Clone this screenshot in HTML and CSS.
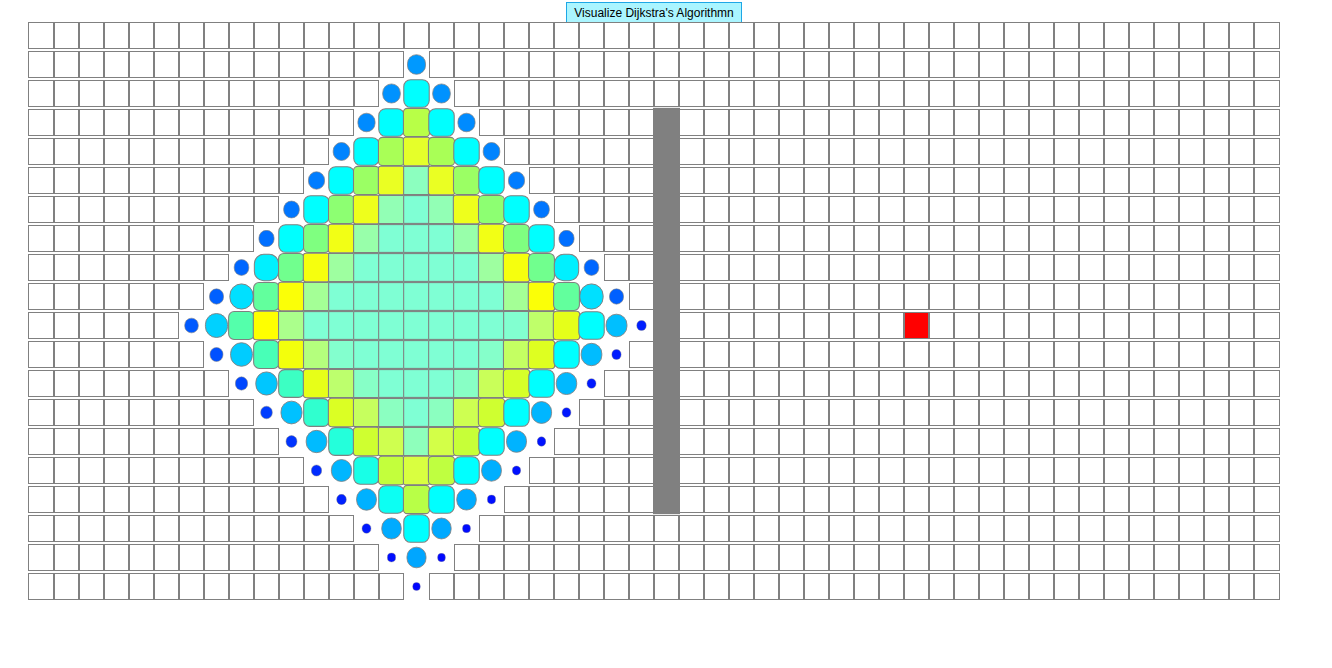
FILE: index.html
```html
<!DOCTYPE html>
<html>
  <head>
    <meta charset="UTF-8" />
    <title>Dijkstra Visualizer</title>
    <link rel="stylesheet" href="styles.css">
  </head>
  <body>
    <div class="board">
      <button class="visualize">Visualize Dijkstra's Algorithmn</button>
      <div class="grid" id="grid"></div>
    </div>
    <script src="script.js"></script>
  </body>
</html>
```

FILE: styles.css
```css
body {
  margin: 0;
  background: #fff;
  font-family: "Liberation Sans", Arial, sans-serif;
}
.board {
  display: flex;
  flex-direction: column;
  width: 1252px;
  margin: 2px 0 0 28px;
}
.visualize {
  align-self: center;
  height: 20px;
  padding: 0 7px;
  border: 1px solid #1ea7e6;
  border-bottom-width: 0;
  background: #aaf5ff;
  color: #000;
  font-family: inherit;
  font-size: 12px;
}
.grid {
  display: flex;
  flex-direction: column;
  gap: 2px;
}
.row {
  display: flex;
}
.cell {
  box-sizing: border-box;
  flex: none;
  width: 25px;
  height: 27px;
  border: 1px solid #808080;
  background: #fff;
}
.cell:first-child,
.cell:last-child {
  width: 26px;
}
.wall {
  background: #808080;
  transform: scale(1.08);
}
.target {
  background: #f00;
}
```

FILE: script.js
```js
const ROWS = 20;
const COLS = 50;
const START = { row: 10, col: 15 };
const TARGET = { row: 10, col: 35 };
const WALL = { col: 25, from: 3, to: 16 };

// how far along the animation each ring is, by distance from the start:
// [top, left tip, bottom, right tip]
const RINGS = {
  4: [3, 3, 2.88, 2.98],
  5: [2.9, 2.66, 2.3, 2.5],
  6: [2.2, 2, 1.72, 1.9],
  7: [1.72, 1.33, 1, 1],
  8: [1.3, 0.82, 0.65, 0.75],
  9: [0.6, 0.35, 0.02, 0.12],
};

function mix(a, b, t) {
  return a + (b - a) * t;
}

function ringProgress(row, col, dist) {
  if (dist <= 3) return 3;
  const [top, left, bottom, right] = RINGS[dist];
  const dy = row - START.row;
  const k = (dist - Math.abs(dy)) / dist;
  if (dy < 0) return mix(left, top, 1 - k);
  const tip = col < START.col ? left : right;
  return mix(tip, bottom, 1 - k);
}

function paint(cell, p) {
  let color, scale, radius;
  if (p <= 1) {
    color = [0, 255 * p, 255];
    scale = mix(0.3, 1.06, p);
    radius = p < 0.85 ? 14 : mix(14, 7, (p - 0.85) / 0.15);
  } else if (p <= 2) {
    color = [255 * (p - 1), 255, 255 * (2 - p)];
    scale = mix(1.06, 1.1, p - 1);
    radius = mix(7, 3, p - 1);
  } else {
    color = [mix(255, 127, p - 2), 255, mix(0, 212, p - 2)];
    scale = mix(1.1, 1.07, p - 2);
    radius = mix(3, 0, p - 2);
  }
  const [r, g, b] = color.map(Math.round);
  cell.style.background = `rgb(${r},${g},${b})`;
  cell.style.transform = `scale(${scale.toFixed(3)})`;
  cell.style.borderRadius = `${radius.toFixed(1)}px`;
}

const grid = document.getElementById("grid");
for (let row = 0; row < ROWS; row++) {
  const rowEl = document.createElement("div");
  rowEl.className = "row";
  for (let col = 0; col < COLS; col++) {
    const cell = document.createElement("div");
    cell.className = "cell";
    const dist = Math.abs(row - START.row) + Math.abs(col - START.col);
    if (col === WALL.col && row >= WALL.from && row <= WALL.to) {
      cell.classList.add("wall");
    } else if (row === TARGET.row && col === TARGET.col) {
      cell.classList.add("target");
    } else if (dist <= 9) {
      paint(cell, Math.min(ringProgress(row, col, dist), dist === 8 ? 1 : 3));
    }
    rowEl.appendChild(cell);
  }
  grid.appendChild(rowEl);
}
```
